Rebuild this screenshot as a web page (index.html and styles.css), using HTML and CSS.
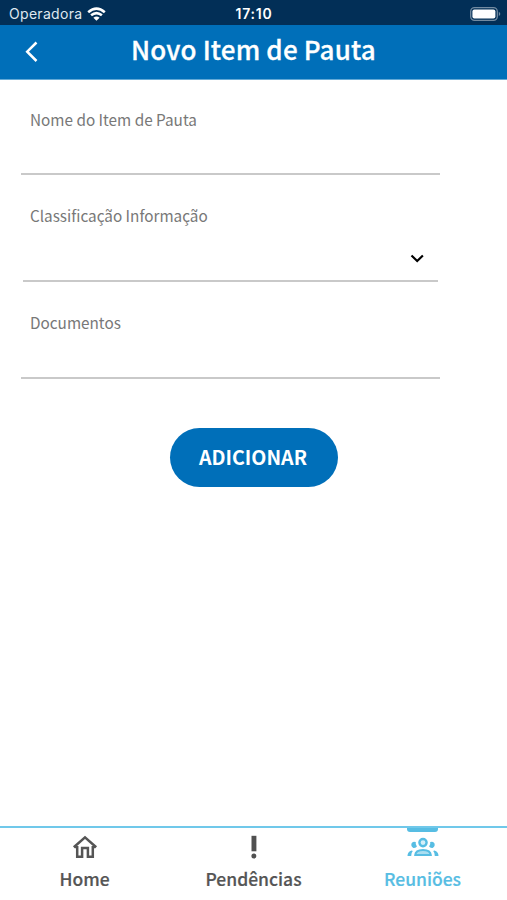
FILE: index.html
```html
<!DOCTYPE html>
<html lang="pt-BR">
<head>
<meta charset="utf-8">
<title>Novo Item de Pauta</title>
<link rel="stylesheet" href="styles.css">
</head>
<body>
<div class="status">
  <div class="carrier"><span>Operadora</span>
    <svg width="19" height="14" viewBox="0 0 19 14" fill="none" stroke="#fff" stroke-width="2.6"><path d="M1.2 5.2Q9.5-1.8 17.8 5.2M4.1 8.3Q9.5 3.8 14.9 8.3"/><path d="M6.4 10.7Q9.5 8.1 12.6 10.7L9.5 13.8Z" fill="#fff" stroke="none"/></svg>
  </div>
  <div class="time">17:10</div>
  <div class="power"><svg width="31" height="14" viewBox="0 0 31 14"><rect x=".7" y=".7" width="26.6" height="12.6" rx="3.8" fill="none" stroke="#738ba1" stroke-width="1.3"/><rect x="2.4" y="2.4" width="23" height="9.2" rx="2" fill="#fff"/><path d="M28.8 4.8q3 2.2 0 4.4z" fill="#738ba1"/></svg></div>
</div>
<header class="header">
  <svg class="back" width="14" height="22" viewBox="0 0 14 22" fill="none" stroke="#fff" stroke-width="2.5"><path d="M12.5 1.5 3.2 10.7 12.5 20"/></svg>
  <h1>Novo Item de Pauta</h1>
</header>
<main class="form">
  <div class="field first"><label>Nome do Item de Pauta</label></div>
  <div class="field select"><label>Classificação Informação</label>
    <svg class="chevron" width="14" height="9" viewBox="0 0 14 9" fill="none" stroke="#000" stroke-width="2.2"><path d="M1.5 1.5 7.2 7 12.9 1.5"/></svg>
  </div>
  <div class="field docs"><label>Documentos</label></div>
  <button class="add">ADICIONAR</button>
</main>
<nav class="tabs">
  <a class="tab">
    <svg width="26" height="24" viewBox="0 0 26 24" fill="none" stroke="#555" stroke-width="2.5"><path d="M1.8 12.3 13 2.4 24.2 12.3M5.2 11V21.7H10.1V12.9H15.900V21.7H20.8V11M2.5 12.1H5.2M20.8 12.1H23.5"/></svg>
    <span>Home</span></a>
  <a class="tab">
    <svg width="26" height="24" viewBox="0 0 26 24" fill="#505050"><path d="M10.5 .8h4.900v15.500h-4.900z"/><circle cx="12.900" cy="21.100" r="2.500"/></svg>
    <span>Pendências</span></a>
  <a class="tab active">
    <svg width="32" height="24" viewBox="0 0 32 24" fill="#57bde3"><circle cx="16" cy="7.600" r="3.600" fill="#d5eff8" stroke="#57bde3" stroke-width="2.400"/><path d="M8.300 20q.3-5 7.700-5t7.700 5z" fill="#aadef1" stroke="#57bde3" stroke-width="2.200"/><path d="M8.800 7.100q-3-1.300-4.200 1.200-1.100 3.200 1.800 4.600 2.600.3 3.500-1.400-1.700-2-1.100-4.400zM23.200 7.100q3-1.300 4.200 1.200 1.100 3.200-1.800 4.600-2.600.3-3.500-1.400 1.700-2 1.100-4.400zM.5 21q0-4.300 4.100-5.500l1.200.6q-1.800 2.100-1.600 4.900zM31.500 21q0-4.300-4.100-5.500l-1.200.6q1.800 2.100 1.600 4.900z"/></svg>
    <span>Reuniões</span></a>
</nav>
</body>
</html>
```
FILE: styles.css
```css
* { box-sizing: border-box; }
body {
  margin: 0;
  width: 507px;
  height: 900px;
  display: flex;
  flex-direction: column;
  background: #fff;
  font-family: "Noto Sans CJK SC", "Noto Sans", sans-serif;
  overflow: hidden;
}
.status {
  height: 25px;
  background: #022f57;
  color: #fff;
  display: grid;
  grid-template-columns: 1fr auto 1fr;
  align-items: center;
  padding: 2px 6px 0 9px;
  font: 14px/22px Inter, sans-serif;
}
.carrier { display: flex; align-items: center; gap: 5px; color: #dfe8f0; letter-spacing: .3px; }
.time { font-weight: 600; letter-spacing: .75px; margin-right: 2px; }
.power { display: flex; justify-content: flex-end; }
.header {
  height: 55px;
  background: #006fb9;
  border-bottom: 1px solid #63aad7;
  display: grid;
  grid-template-columns: 60px 1fr 60px;
  align-items: center;
}
.back { margin-left: 24px; }
h1 {
  margin: 0 0 6px;
  color: #fff;
  font-size: 26px;
  font-weight: 500;
  line-height: 40px;
  letter-spacing: .15px;
  -webkit-text-stroke: .3px #fff;
  text-align: center;
  white-space: nowrap;
}
.form { flex: 1; display: flex; flex-direction: column; }
.field {
  width: 419px;
  margin-left: 21px;
  padding-left: 9px;
  border-bottom: 2px solid #c9c9c9;
  color: #787878;
  font-size: 15.3px;
  line-height: 24px;
}
.first { height: 95px; padding-top: 27px; }
.select {
  width: 415px;
  height: 107px;
  margin-left: 23px;
  padding: 28px 14px 0 7px;
  display: flex;
  flex-direction: column;
}
.chevron { align-self: flex-end; margin-top: 27px; }
.docs { height: 97px; padding-top: 28px; }
.add {
  width: 168px;
  height: 59px;
  margin: 49px 0 0 170px;
  padding: 0 2px 1px 0;
  border: 0;
  border-radius: 30px;
  background: #006fb9;
  color: #fff;
  font: 700 19.6px/30px "Noto Sans CJK SC", sans-serif;
}
.tabs {
  height: 74px;
  border-top: 2px solid #70c8ea;
  display: grid;
  grid-template-columns: repeat(3, 1fr);
}
.tab {
  display: flex;
  flex-direction: column;
  align-items: center;
  padding-top: 7px;
  gap: 7px;
  color: #555;
  font-size: 17.5px;
  font-weight: 500;
  line-height: 26px;
  -webkit-text-stroke: .2px currentColor;
}
.active { color: #57bde3; padding-top: 0; }
.active::before {
  content: "";
  width: 31px;
  height: 4px;
  margin-bottom: -4px;
  border-radius: 0 0 3px 3px;
  background: #57bde3;
}
```
